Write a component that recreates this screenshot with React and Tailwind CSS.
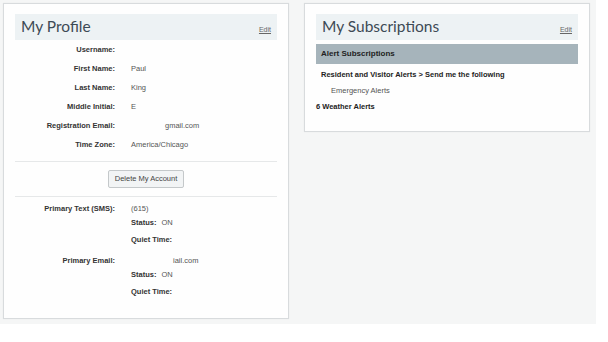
import React from "react";

const body = { fontFamily: '"Liberation Sans", Arial, sans-serif' };
const title = { fontFamily: 'Lato, "Liberation Sans", sans-serif' };

function Row({ label, value, className = "h-[19px]" }) {
  return (
    <div className={"flex items-center " + className}>
      <div className="w-[100px] text-right font-bold text-[#333]">{label}</div>
      <div className="ml-[16px] text-[#555]">{value}</div>
    </div>
  );
}

function SubRow({ label, value, className }) {
  return (
    <div className={"flex items-center pl-[116px] " + className}>
      <span className="font-bold text-[#333]">{label}</span>
      {value && <span className="ml-[5px] text-[#555]">{value}</span>}
    </div>
  );
}

function Header({ text }) {
  return (
    <div className="flex h-[26px] items-center justify-between bg-[#edf2f4] pl-[6px] pr-[6px]">
      <span style={title} className="text-[15.5px] leading-none text-[#3d4a55]">{text}</span>
      <a className="mt-[6px] text-[7px] text-[#666] underline">Edit</a>
    </div>
  );
}

export default function App() {
  return (
    <div style={body} className="h-[342px] w-[608px] bg-white text-[7.5px]">
      <div className="flex h-[324px] w-[596px] items-start gap-[15px] bg-[#f5f6f6] p-[3px]">
        <div className="w-[286px] border border-[#d8dbdd] bg-[#fefefe] px-[11px] pt-[10px] pb-[19px] shadow-[0_0_1px_rgba(0,0,0,0.08)]">
          <Header text="My Profile" />
          <Row label="Username:" value="" />
          <Row label="First Name:" value="Paul" />
          <Row label="Last Name:" value="King" />
          <Row label="Middle Initial:" value="E" />
          <Row label="Registration Email:" value={<span className="ml-[34px]">gmail.com</span>} />
          <Row label="Time Zone:" value="America/Chicago" />
          <div className="mt-[7px] h-px bg-[#e6e8e9]" />
          <div className="flex justify-center pt-[8px]">
            <button className="flex h-[18px] w-[76px] items-center justify-center rounded-[2px] border border-[#c4c8ca] bg-[#f2f4f5] text-[7.5px] text-[#444]">
              Delete My Account
            </button>
          </div>
          <div className="mt-[8px] h-px bg-[#e6e8e9]" />
          <Row label="Primary Text (SMS):" value="(615)" className="mt-[5px] h-[14px]" />
          <SubRow label="Status:" value="ON" className="h-[14px]" />
          <SubRow label="Quiet Time:" className="mt-[2px] h-[15px]" />
          <Row label="Primary Email:" value={<span className="ml-[42px]">iail.com</span>} className="mt-[6px] h-[15px]" />
          <SubRow label="Status:" value="ON" className="h-[14px]" />
          <SubRow label="Quiet Time:" className="mt-[2px] h-[15px]" />
        </div>

        <div className="w-[286px] border border-[#d8dbdd] bg-[#fefefe] px-[11px] pt-[10px] pb-[17px] shadow-[0_0_1px_rgba(0,0,0,0.08)]">
          <Header text="My Subscriptions" />
          <div className="mt-[4px] flex h-[20px] items-center bg-[#a6b4bb] pl-[5px] text-[8px] font-bold text-[#222]">
            Alert Subscriptions
          </div>
          <div className="mt-[4px] flex h-[14px] items-center pl-[5px] font-bold text-[#222]">
            Resident and Visitor Alerts &gt; Send me the following
          </div>
          <div className="mt-[2px] flex h-[14px] items-center pl-[15px] text-[#555]">Emergency Alerts</div>
          <div className="mt-[2px] flex h-[14px] items-center font-bold text-[#222]">6 Weather Alerts</div>
        </div>
      </div>
    </div>
  );
}
